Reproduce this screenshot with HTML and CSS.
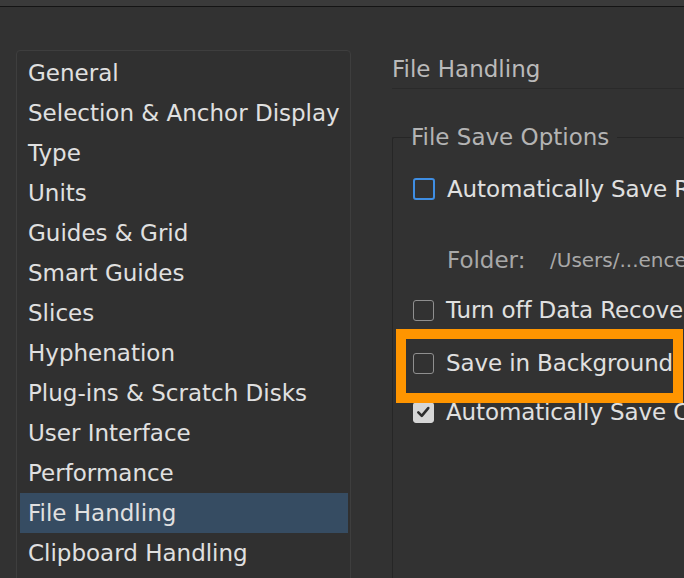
FILE: index.html
```html
<!DOCTYPE html>
<html>
<head>
<meta charset="utf-8">
<link rel="stylesheet" href="styles.css">
</head>
<body>
<div class="topbar"></div>
<div class="main">
  <ul class="sidebar">
    <li class="item">General</li>
    <li class="item">Selection &amp; Anchor Display</li>
    <li class="item">Type</li>
    <li class="item">Units</li>
    <li class="item">Guides &amp; Grid</li>
    <li class="item">Smart Guides</li>
    <li class="item">Slices</li>
    <li class="item">Hyphenation</li>
    <li class="item">Plug-ins &amp; Scratch Disks</li>
    <li class="item">User Interface</li>
    <li class="item">Performance</li>
    <li class="item selected">File Handling</li>
    <li class="item">Clipboard Handling</li>
  </ul>
  <div class="content">
    <div class="heading">File Handling</div>
    <fieldset class="group">
      <legend class="legend">File Save Options</legend>
      <div class="row row-first"><span class="box box-focus"></span><span class="label">Automatically Save Recovery Data Every</span></div>
      <div class="folder"><span class="folder-label">Folder:</span><span class="folder-path">/Users/...ences</span></div>
      <div class="row row-turn"><span class="box"></span><span class="label">Turn off Data Recovery</span></div>
      <div class="row row-bg"><span class="box"></span><span class="label">Save in Background</span></div>
      <div class="row row-auto"><span class="box box-checked"><svg viewBox="0 0 22 22" width="20" height="20"><path d="M5 11.5 L9 15.5 L16.5 6.5" fill="none" stroke="#2e2e2e" stroke-width="3" stroke-linecap="round" stroke-linejoin="round"/></svg></span><span class="label">Automatically Save Cloud Documents</span></div>
    </fieldset>
  </div>
</div>
<div class="highlight"></div>
</body>
</html>
```
FILE: styles.css
```css
html, body {
  margin: 0;
  padding: 0;
  width: 684px;
  height: 578px;
  overflow: hidden;
  background: #323232;
  font-family: "DejaVu Sans", "Open Sans", sans-serif;
  font-size: 23px;
  color: #e0e0e0;
}
.topbar {
  height: 6px;
  background: #3a3a3a;
  border-bottom: 1px solid #141414;
}
.main {
  display: flex;
  padding-left: 16px;
  padding-top: 43px;
}
.sidebar {
  list-style: none;
  margin: 0;
  padding: 2px 2px 20px 3px;
  width: 328px;
  flex: none;
  border: 1px solid #3e3e3e;
  border-radius: 4px;
  background: #303030;
}
.item {
  height: 40px;
  line-height: 40px;
  padding-left: 8px;
  white-space: nowrap;
  color: #e0e0e0;
}
.selected {
  background: #364c62;
}
.content {
  margin-left: 40px;
  flex: 1;
  min-width: 0;
  white-space: nowrap;
}
.heading {
  margin-top: 1px;
  margin-left: 1px;
  height: 37px;
  line-height: 37px;
  color: #bababa;
  border-bottom: 1px solid #2a2a2a;
}
.group {
  margin: 33px 0 0 1px;
  padding: 0 0 300px 20px;
  border: 1px solid #262626;
  border-right: none;
  border-radius: 2px;
  min-width: 0;
}
.legend {
  padding: 0 8px 0 0;
  margin-left: -2px;
  color: #b4b4b4;
  line-height: 30px;
}
.row {
  display: flex;
  align-items: center;
  height: 30px;
}
.row-first { margin-top: 22px; }
.row-turn { margin-top: 20px; }
.row-bg { margin-top: 23px; }
.row-auto { margin-top: 19px; }
.box {
  width: 19px;
  height: 19px;
  border: 1.5px solid #8f8f8f;
  border-radius: 3px;
  flex: none;
  margin-right: 12px;
  display: flex;
  align-items: center;
  justify-content: center;
}
.box-focus {
  border: 2px solid #3f8ee3;
  width: 18px;
  height: 18px;
}
.box-checked {
  background: #d6d6d6;
  border-color: #d6d6d6;
}
.label {
  color: #e0e0e0;
  letter-spacing: -0.12px;
}
.folder {
  margin-top: 41px;
  margin-left: 34px;
  height: 30px;
  line-height: 30px;
  display: flex;
}
.folder-label {
  color: #a8a8a8;
  width: 103px;
  flex: none;
}
.folder-path {
  color: #a8a8a8;
  font-size: 20px;
}
.highlight {
  position: absolute;
  left: 396px;
  top: 329px;
  width: 267px;
  height: 54px;
  border: 10px solid #ff9500;
}
```
